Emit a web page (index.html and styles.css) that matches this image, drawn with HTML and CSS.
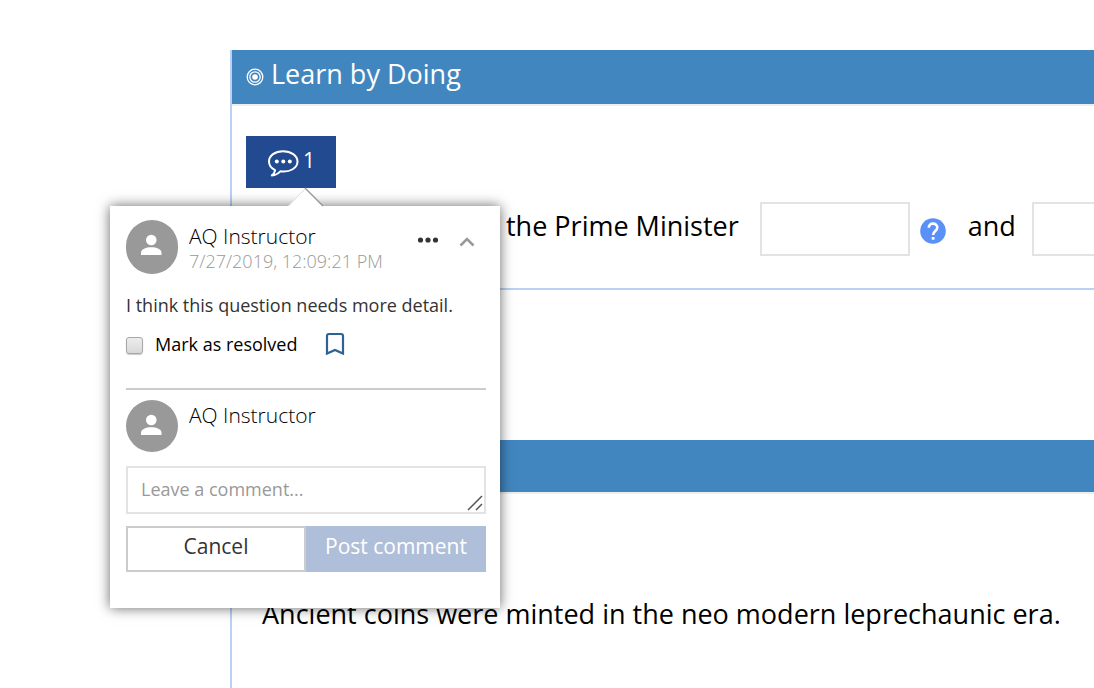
FILE: index.html
```html
<!DOCTYPE html>
<html lang="en">
<head>
<meta charset="utf-8">
<title>Learn by Doing</title>
<link rel="stylesheet" href="styles.css">
</head>
<body>
<main class="page">
  <section class="activity">
    <header class="activity-header">
      <svg class="target" viewBox="0 0 18 18" aria-hidden="true"><circle cx="9" cy="9" r="7.8"/><circle cx="9" cy="9" r="5.2"/><circle class="dot" cx="9" cy="9" r="2.8"/></svg>
      <h2 class="title">Learn by Doing</h2>
    </header>
    <div class="activity-body">
      <div class="thread">
        <button class="thread-toggle" type="button" aria-label="1 comment">
          <svg class="bubble" viewBox="0 0 32 28" aria-hidden="true"><path d="M16 2.200C8 2.200 2 6.600 2 12.400c0 3.700 2.400 6.900 6.100 8.700-.3 2.400-1.500 4-3.300 5.300 3.600-.3 6.500-1.900 8.500-4.100 10 1.400 17.200-3.600 17.200-9.900C30.500 6.600 24 2.200 16 2.200z"/><circle cx="9.800" cy="12.500" r="2"/><circle cx="16.300" cy="12.500" r="2"/><circle cx="22.800" cy="12.500" r="2"/></svg>
          <span>1</span>
        </button>
        <div class="popover">
          <svg class="pointer" viewBox="0 0 38 20" aria-hidden="true"><path class="fill" d="M1 20 18.500 1.500 36 20z"/><path class="lit" d="M1 19 18.500 1.500"/><path class="edge" d="M18 1 36 19"/></svg>
          <article class="comment">
            <div class="author">
              <svg class="avatar tall" viewBox="0 0 52 54" aria-hidden="true"><rect width="52" height="54" rx="26" ry="26"/><circle cx="25.300" cy="20" r="5.300"/><path d="M15 35v-2.500c0-3.300 5-5.300 10.300-5.300s10.200 2 10.200 5.300V35z"/></svg>
              <div class="who">
                <span class="name">AQ Instructor</span>
                <time class="date">7/27/2019, 12:09:21 PM</time>
              </div>
              <div class="tools">
                <button class="tool" type="button" aria-label="More options"><svg class="more" viewBox="0 0 22 6"><circle cx="3.500" cy="3" r="2.600"/><circle cx="11" cy="3" r="2.600"/><circle cx="18.500" cy="3" r="2.600"/></svg></button>
                <button class="tool" type="button" aria-label="Collapse"><svg class="chevron" viewBox="0 0 16 12"><path d="M1.500 9.500 8 3l6.500 6.500"/></svg></button>
              </div>
            </div>
            <p class="message">I think this question needs more detail.</p>
            <div class="status">
              <input class="check" type="checkbox" id="resolved">
              <label class="check-label" for="resolved">Mark as resolved</label>
              <button class="tool" type="button" aria-label="Bookmark"><svg class="bookmark" viewBox="0 0 20 24"><path d="M4 2h12a2 2 0 0 1 2 2v17.500l-8-3.500-8 3.500V4a2 2 0 0 1 2-2z"/></svg></button>
            </div>
          </article>
          <form class="reply">
            <div class="author">
              <svg class="avatar" viewBox="0 0 52 52" aria-hidden="true"><circle class="disc" cx="26" cy="26" r="26"/><circle cx="25.300" cy="20" r="5.300"/><path d="M15 35v-2.500c0-3.300 5-5.300 10.300-5.300s10.200 2 10.200 5.300V35z"/></svg>
              <span class="name">AQ Instructor</span>
            </div>
            <div class="field">
              <textarea class="reply-text" rows="1" placeholder="Leave a comment..." aria-label="Leave a comment"></textarea>
              <svg class="grip" viewBox="0 0 16 16" aria-hidden="true"><path d="M1 15 15 1M9 15l6-6"/></svg>
            </div>
            <div class="actions">
              <button class="btn cancel" type="button">Cancel</button>
              <button class="btn post" type="submit" disabled>Post comment</button>
            </div>
          </form>
        </div>
      </div>
      <div class="question">
        <label for="minister">the Prime Minister</label>
        <input class="blank first" id="minister" type="text">
        <button class="help" type="button" aria-label="Help"><svg viewBox="0 0 26 26"><circle cx="13" cy="13" r="12.800"/><path d="M8.800 9.800C8.800 7 10.600 5.600 13 5.600s4.300 1.500 4.300 4c0 3.300-4.200 3.600-4.200 7.300"/><rect x="11.700" y="19" width="2.800" height="2.700"/></svg></button>
        <label class="and" for="second">and</label>
        <input class="blank" id="second" type="text">
      </div>
    </div>
  </section>
  <section class="activity second">
    <header class="activity-header short"></header>
    <p class="prompt">Ancient coins were minted in the neo modern leprechaunic era.</p>
  </section>
</main>
</body>
</html>
```
FILE: styles.css
```css
* { box-sizing: border-box; }
body {
  margin: 0;
  background: #fff;
  color: #000;
  font-family: "Open Sans", "Noto Sans", sans-serif;
  font-size: 27px;
  line-height: 36px;
  overflow: hidden;
}
button { font: inherit; margin: 0; padding: 0; border: 0; background: none; }
svg { display: block; flex: none; }
.page { min-height: 100vh; padding: 50px 0 0 230px; display: flex; flex-direction: column; gap: 150px; }
.activity { border-left: 2px solid #bad0f5; border-bottom: 2px solid #bad0f5; }
.activity.second { flex: 1; border-bottom: 0; }
.activity-header {
  display: flex;
  align-items: center;
  gap: 7px;
  height: 56px;
  padding: 0 14px 6px;
  background: #4286c0;
  border-bottom: 2px solid #eee;
}
.activity-header.short { height: 54px; }
.title { margin: 0; color: #fff; font-size: 27px; font-weight: 400; }
.target { width: 18px; height: 18px; margin-top: 6px; fill: none; stroke: #fff; stroke-width: 1.300; }
.target .dot { fill: #fff; stroke: none; }
.activity-body { padding: 30px 0 32px 14px; }
.thread { position: relative; width: 90px; }
.thread-toggle {
  display: flex;
  align-items: center;
  justify-content: center;
  gap: 4px;
  width: 90px;
  height: 52px;
  background: #214a90;
  color: #fff;
  font-size: 21px;
  line-height: 28px;
}
.thread-toggle span { padding-bottom: 4px; }
.bubble { width: 32px; height: 28px; margin-top: 2px; fill: none; stroke: #fff; stroke-width: 2; stroke-linejoin: round; }
.bubble circle { fill: #fff; stroke: none; }
.popover {
  position: absolute;
  z-index: 2;
  top: 70px;
  left: -136px;
  width: 390px;
  padding: 14px 14px 36px 16px;
  background: #fff;
  box-shadow: 0 0 12px rgba(0, 0, 0, .6);
}
.pointer { position: absolute; left: 177px; top: -19px; width: 38px; height: 20px; fill: none; }
.pointer .fill { fill: #fff; }
.pointer .edge { stroke: #999; stroke-width: 1.500; }
.pointer .lit { stroke: #ddd; stroke-width: 1; }
.comment { padding-bottom: 30px; border-bottom: 2px solid #ccc; }
.author { display: flex; align-items: flex-start; gap: 11px; }
.avatar { width: 52px; height: 52px; fill: #fff; }
.avatar.tall { height: 54px; }
.avatar rect, .avatar .disc { fill: #999; }
.who { display: flex; flex-direction: column; flex: 1; padding-top: 3px; }
.name { font-size: 21px; line-height: 26px; font-weight: 300; white-space: nowrap; }
.date { font-size: 18px; line-height: 24px; font-weight: 300; color: #999; white-space: nowrap; }
.tools { display: flex; align-items: center; gap: 20px; padding: 12px 11px 0 0; }
.more { width: 22px; height: 6px; fill: #333; }
.chevron { width: 16px; height: 12px; margin-top: 4px; fill: none; stroke: #999; stroke-width: 2.500; }
.message { margin: 18px 0 12px; font-size: 18px; line-height: 26px; color: #333; white-space: nowrap; }
.status { display: flex; align-items: center; gap: 12px; height: 28px; }
.check {
  appearance: none;
  width: 17px;
  height: 17px;
  margin: 2px 0 0;
  border: 1px solid #a6a6a6;
  border-radius: 3px;
  background: linear-gradient(#ededed, #d8d8d8);
  box-shadow: 0 1px 1px rgba(0, 0, 0, .2);
}
.check-label { padding-right: 16px; font-size: 18px; line-height: 26px; }
.bookmark { width: 20px; height: 24px; fill: none; stroke: #2a6394; stroke-width: 2.200; }
.reply { padding-top: 10px; }
.reply .name { padding-top: 2px; }
.field { position: relative; margin: 14px 0 12px; }
.reply-text {
  display: block;
  width: 100%;
  height: 48px;
  padding: 8px 13px;
  border: 2px solid #e3e3e3;
  background: #fff;
  font: 18px/26px "Open Sans", "Noto Sans", sans-serif;
  resize: none;
  overflow: hidden;
}
.reply-text::placeholder { color: #999; opacity: 1; }
.grip { position: absolute; right: 3px; bottom: 3px; width: 16px; height: 16px; stroke: #555; stroke-width: 1.500; }
.actions { display: grid; grid-template-columns: 1fr 1fr; }
.btn { height: 46px; padding-bottom: 6px; font-size: 21px; line-height: 28px; white-space: nowrap; }
.cancel { border: 2px solid #ccc; color: #333; }
.post { background: #afbfd9; color: #fff; }
.question { display: flex; align-items: center; margin-top: 14px; padding-left: 260px; white-space: nowrap; overflow: hidden; }
.question label { padding-bottom: 6px; }
.blank { flex: none; width: 150px; height: 54px; padding: 0 12px; border: 2px solid #e3e3e3; font: inherit; }
.blank.first { margin-left: 21px; }
.help { margin: 4px 22px 0 10px; }
.help svg { width: 26px; height: 26px; fill: #5b90f7; }
.help path { fill: none; stroke: #fff; stroke-width: 2.600; }
.help rect { fill: #fff; }
.and { margin-right: 16px; }
.prompt { margin: 102px 0 0 30px; white-space: nowrap; }
```
